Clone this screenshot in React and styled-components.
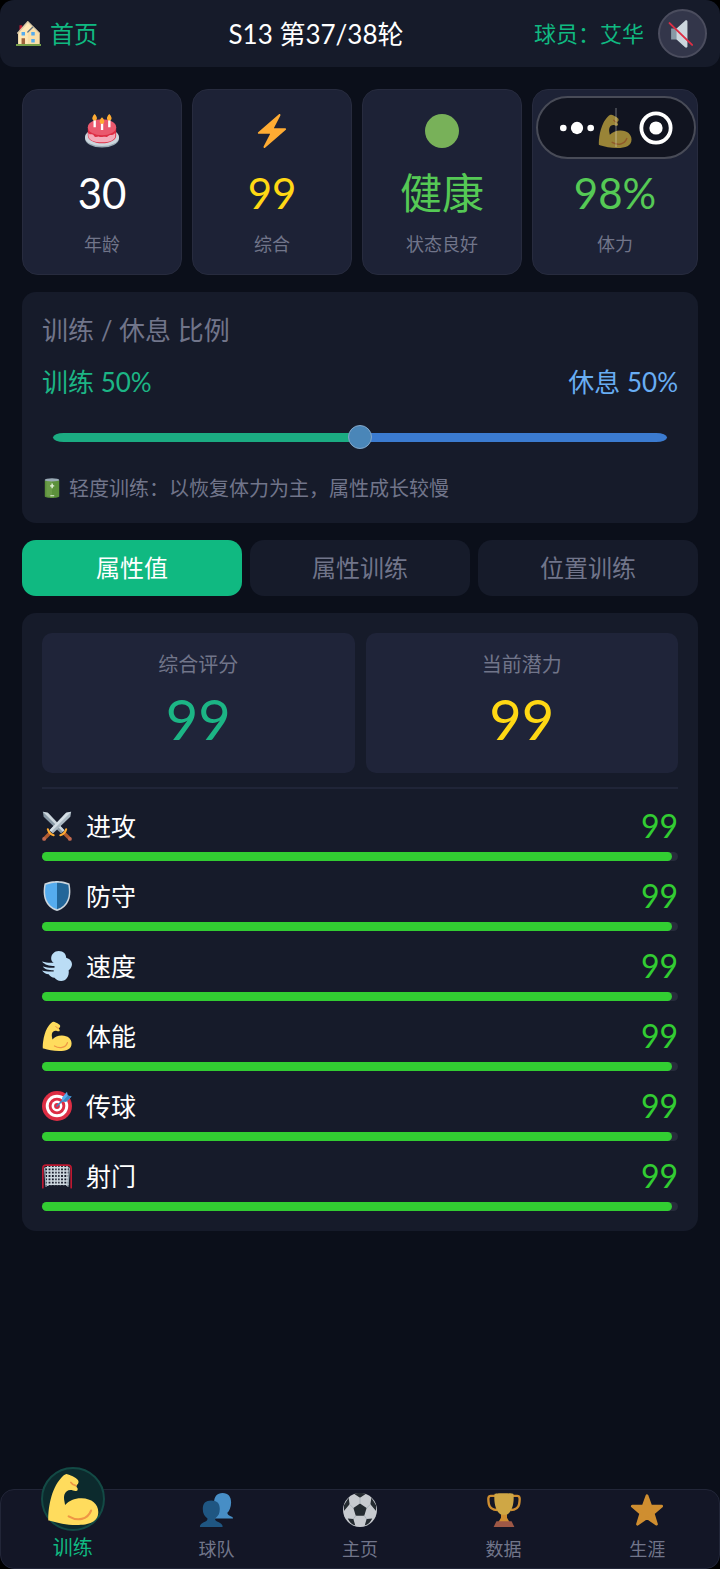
import React, { useState } from 'react'
import styled, { createGlobalStyle } from 'styled-components'

const GlobalStyle = createGlobalStyle`
*{
    box-sizing: border-box;
}
body{
    margin: 0;
    background-color: #000;
    color: #fff;
    font-family: Lato, 'Noto Sans CJK SC', sans-serif;
}
h1, h2, p, dl, dd, dt, ul{
    margin: 0;
    padding: 0;
    font-weight: 400;
}
button{
    font-family: inherit;
    cursor: pointer;
}
a{
    text-decoration: none;
}
`
const Page = styled.div`
display: flex;
flex-direction: column;
min-height: 100vh;
overflow: hidden;
border-radius: 14px;
background-color: #0b0f1a;
`
const Svg = styled.svg`
display: block;
flex: none;
width: ${props => props.$size}px;
height: ${props => props.$size}px;
`
const Header = styled.header`
display: flex;
align-items: center;
justify-content: space-between;
padding: 9px 13px 9px 16px;
border-radius: 14px;
background-color: #161b2a;
`
const HomeLink = styled.a`
display: flex;
align-items: center;
gap: 9px;
color: #10b981;
font-size: 24px;
line-height: 32px;
`
const Title = styled.h1`
font-size: 26px;
line-height: 32px;
`
const Account = styled.div`
display: flex;
align-items: center;
gap: 14px;
color: #10b981;
font-size: 22px;
line-height: 32px;
`
const MuteButton = styled.button`
display: flex;
align-items: center;
justify-content: center;
width: 49px;
height: 49px;
padding: 0;
border: 2px solid #4b4d5e;
border-radius: 50%;
background-color: #33364a;
`
const Main = styled.main`
display: flex;
flex-direction: column;
gap: 17px;
padding: 22px 22px 40px;
`
const Stats = styled.dl`
position: relative;
display: grid;
grid-template-columns: repeat(3, 1fr) 166px;
gap: 10px;
`
const StatCard = styled.div`
display: flex;
flex-direction: column;
align-items: center;
padding: 24px 0 18px;
border: 1px solid #272b3e;
border-radius: 16px;
background-color: #1d2236;
`
const StatValue = styled.dd`
order: 1;
margin-top: 20px;
color: ${props => props.$color};
font-size: 42px;
line-height: 50px;
`
const StatLabel = styled.dt`
order: 2;
margin-top: 14px;
color: #71758a;
font-size: 18px;
line-height: 24px;
`
const Capsule = styled.div`
position: absolute;
top: 7px;
right: 2px;
display: flex;
width: 160px;
height: 63px;
padding: 10px 0;
border: 2px solid #484b57;
border-radius: 32px;
background-color: rgba(0, 0, 0, 0.4);
`
const CapsuleButton = styled.button`
display: flex;
flex: 1;
align-items: center;
justify-content: center;
padding: 0;
border: 0;
background: none;

& + &{
    border-left: 2px solid rgba(255, 255, 255, 0.2);
}
`
const Panel = styled.section`
padding: 20px;
border-radius: 14px;
background-color: #161b2a;
`
const RatioPanel = styled(Panel)`
display: flex;
flex-direction: column;
padding: 22px 20px 23px;
`
const PanelTitle = styled.h2`
color: #71758a;
font-size: 26px;
line-height: 32px;
`
const RatioRow = styled.div`
display: flex;
justify-content: space-between;
margin-top: 20px;
font-size: 26px;
line-height: 32px;
`
const RatioLabel = styled.label`
color: #1cb585;
`
const RestLabel = styled.span`
color: #68adf3;
`
const Slider = styled.input`
appearance: none;
height: 24px;
margin: 27px 11px;
background: none;

&::-webkit-slider-runnable-track{
    height: 9px;
    border-radius: 12px / 5px;
    background: linear-gradient(to right, #1bac82 ${props => props.value}%, #3b7bd0 ${props => props.value}%);
}
&::-webkit-slider-thumb{
    appearance: none;
    width: 24px;
    height: 24px;
    margin-top: -8px;
    border: 1px solid #84a8ca;
    border-radius: 50%;
    background-color: #4a86b8;
}
`
const Hint = styled.p`
display: flex;
align-items: center;
gap: 7px;
color: #71758a;
font-size: 20px;
line-height: 24px;
`
const Tabs = styled.div`
display: grid;
grid-template-columns: repeat(3, 1fr);
gap: 8px;
`
const Tab = styled.button`
height: 56px;
padding: 0;
border: 0;
border-radius: 14px;
background-color: ${props => props.$active ? '#10b981' : '#161b2a'};
color: ${props => props.$active ? '#fff' : '#71758a'};
font-size: 24px;
line-height: 32px;
`
const Scores = styled.dl`
display: grid;
grid-template-columns: 1fr 1fr;
gap: 11px;
padding-bottom: 14px;
border-bottom: 2px solid #202538;
`
const ScoreCard = styled.div`
display: flex;
flex-direction: column;
align-items: center;
height: 140px;
padding-top: 19px;
border-radius: 10px;
background-color: #1f2439;
`
const ScoreLabel = styled.dt`
color: #71758a;
font-size: 20px;
line-height: 24px;
`
const ScoreValue = styled.dd`
margin-top: 11px;
color: ${props => props.$color};
font-size: 56px;
line-height: 64px;
`
const Attributes = styled.ul`
display: flex;
flex-direction: column;
gap: 19px;
padding-top: 21px;
list-style: none;
`
const AttributeHead = styled.div`
display: flex;
align-items: center;
gap: 14px;
margin-bottom: 10px;
font-size: 25px;
line-height: 32px;
`
const AttributeValue = styled.span`
margin-left: auto;
color: #32cd32;
font-size: 32px;
`
const Track = styled.div`
height: 9px;
border-radius: 5px;
background-color: #272c3b;
`
const Fill = styled.div`
height: 100%;
border-radius: 5px;
background-color: #32cd32;
`
const BottomNav = styled.nav`
display: grid;
grid-template-rows: 100%;
grid-template-columns: repeat(5, 1fr);
height: 80px;
margin-top: auto;
border: 1px solid #222638;
border-radius: 14px;
background-color: #131626;
`
const NavItem = styled.a`
display: flex;
flex-direction: column;
align-items: center;
justify-content: flex-end;
gap: ${props => props.$active ? '4px' : '10px'};
padding-bottom: ${props => props.$active ? '9px' : '7px'};
color: ${props => props.$active ? '#10b981' : '#71758a'};
font-size: ${props => props.$active ? '20px' : '18px'};
line-height: 24px;

& > svg{
    opacity: 0.8;
}
`
const NavBubble = styled.span`
display: flex;
flex: none;
align-items: center;
justify-content: center;
width: 64px;
height: 64px;
border: 2px solid #134a45;
border-radius: 50%;
background-color: #0c2a2d;
`

const Icon = ({ size, children }) => (
    <Svg $size={size} viewBox="0 0 36 36" aria-hidden="true">{children}</Svg>
)

const House = ({ size }) => (
    <Icon size={size}>
        <path fill="#BE1931" d="M5 6h4v9H5z" />
        <path fill="#FFE8B6" d="M3 34V18L8 11l8-8 2-1 10 9 6 7v16z" />
        <path fill="#F5D59A" d="M17 34V18l6-7 11 8v15z" opacity=".5" />
        <path fill="none" stroke="#D9C9A6" strokeWidth="2" strokeLinejoin="round" d="M2 18 17 1l17 17" />
        <path fill="none" stroke="#66757F" strokeWidth="2" strokeLinecap="round" d="m17 16 7-7" />
        <path fill="#55ACEE" d="M8 16h5v5H8zM22 16h5v5h-5zM22 26h5v5h-5z" />
        <path fill="#A0643C" d="M8 25h5v9H8z" />
        <path fill="#77A04A" d="M0 33h36v3H0z" />
    </Icon>
)

const Muted = ({ size }) => (
    <Icon size={size}>
        <path fill="#8899A6" d="M4 11h8v14H4z" />
        <path fill="#CCD6DD" d="M11 11 22 1c1-1 3-.500 3 1v32c0 1.500-2 2-3 1L11 25z" />
        <path fill="none" stroke="#DD2E44" strokeWidth="2.500" strokeLinecap="round" d="m2 4 29 28" />
    </Icon>
)

const Cake = ({ size }) => (
    <Icon size={size}>
        <ellipse cx="18" cy="26" rx="18" ry="9.500" fill="#9AAAB4" />
        <ellipse cx="18" cy="24.500" rx="18" ry="9.500" fill="#CCD6DD" />
        <path fill="#DD2E44" d="M3 14v9c0 4.500 6.500 8 15 8s15-3.500 15-8v-9z" />
        <path fill="#F4ABBA" d="M3.500 20c2 3 4 0 6 3s4 0 5.500 1 3 0 5 0 3 1 5-1 3 1 7-3v3.500c0 4-6 6.500-14 6.500S3.500 27.500 3.500 23z" />
        <ellipse cx="18" cy="14" rx="15" ry="8.500" fill="#EA596E" />
        <path fill="#FFF" d="M9 6h2.500v8H9zM16.800 9h2.500v8h-2.500zM24.500 6H27v8h-2.500z" />
        <path fill="#FFAC33" d="M10.200 0c4 4 2.500 7 0 7s-4-3 0-7zM18 3.500c4 4 2.500 7 0 7s-4-3 0-7zM25.700 0c4 4 2.500 7 0 7s-4-3 0-7z" />
    </Icon>
)

const Bolt = ({ size }) => (
    <Icon size={size}>
        <path fill="#FFAC33" d="M32.938 15.651C32.792 15.260 32.418 15 32 15H19.925L26.890 1.458c.219-.426.106-.947-.271-1.243C26.437.071 26.218 0 26 0c-.233 0-.466.082-.653.243L18 6.588 3.347 19.243c-.316.273-.430.714-.284 1.105S3.582 21 4 21h12.075L9.110 34.542c-.219.426-.106.947.271 1.243.182.144.401.215.619.215.233 0 .466-.082.653-.243L18 29.412l14.653-12.655c.317-.273.430-.714.285-1.106z" />
    </Icon>
)

const GreenDot = ({ size }) => (
    <Icon size={size}>
        <circle cx="18" cy="18" r="18" fill="#78B159" />
    </Icon>
)

const Muscle = ({ size }) => (
    <Icon size={size}>
        <path fill="#FFDC5D" d="M1 33C.500 28 2 13 8.500 5 11 2 12.500.500 14 .800c1.500.200 3.500 1.200 5 2.200 1.500 1 3.200 2 2.800 3.500-.300 1.300-1.300 1.500-1.500 2.500 0 1 1.300 1.200.900 2.700-.400 1-2 .800-3.200.400-2.500-.900-5 0-6 3-.700 2.500.200 4.500.500 7 3-3 6.500-4.700 11.500-4.600 7 .200 11.500 4 11.500 9.500 0 7-6.500 9-15 9-7.500 0-13-1.500-18.500-3-.600-.100-1 0-1 0z" />
        <path fill="none" stroke="#EF9645" strokeWidth="1.500" strokeLinecap="round" d="M15 30c6 3.500 13 2.500 15.500-4" />
        <path fill="none" stroke="#EF9645" strokeWidth="1.200" strokeLinecap="round" d="M16.500 6.500c1 1.800 2 2 3.500 2.200" />
    </Icon>
)

const Battery = ({ size }) => (
    <Icon size={size}>
        <path fill="#5C913B" d="M5 4h26v29c0 4-26 4-26 0z" />
        <path fill="#77A856" d="M8 5h10v29C12 34 8 33 8 32z" opacity=".5" />
        <ellipse cx="18" cy="3.500" rx="13" ry="3" fill="#99AAB5" />
        <path fill="#E3F0DA" d="M17 10h2.500v3H22v2.500h-2.500v3H17v-3h-2.500V13H17zM15 31h7v2h-7z" />
    </Icon>
)

const Swords = ({ size }) => (
    <Icon size={size}>
        <path fill="#8899A6" d="m1 1 6 1 20 21-4 4L2 7z" />
        <path fill="#CCD6DD" d="m1 1 6 1 20 21-2 2z" />
        <path fill="#AAB8C2" d="m35 1-6 1L9 23l4 4L34 7z" />
        <path fill="#D5DFE6" d="m35 1-6 1L9 23l2 2z" />
        <path fill="none" stroke="#AF5A2F" strokeWidth="4" strokeLinecap="round" d="m9 27-6 6M27 27l6 6" />
        <path fill="none" stroke="#FFAC33" strokeWidth="2.500" strokeLinecap="round" d="M7 22c1 4 3 6 7 7M29 22c-1 4-3 6-7 7" />
        <circle cx="2.500" cy="33.500" r="2.300" fill="#BF6952" />
        <circle cx="33.500" cy="33.500" r="2.300" fill="#BF6952" />
    </Icon>
)

const Shield = ({ size }) => (
    <Icon size={size}>
        <path fill="#CCD6DD" d="M33 3c-7-3-15-3-15-3S10 0 3 3C0 18 3 31 18 36c15-5 18-18 15-33z" />
        <path fill="#55ACEE" d="M18 34C5 29.500 2 18 4.500 4.500 10.500 2 18 2 18 2z" />
        <path fill="#226699" d="M18 34c13-4.500 16-16 13.500-29.500C25.500 2 18 2 18 2z" />
    </Icon>
)

const Dash = ({ size }) => (
    <Icon size={size}>
        <path fill="#BBDDF5" d="M11 9c0-5 4-9 9-9 6 0 9 4 9 8 4 1 7 4 7 8 0 3-2 6-4 7 1 7-3 13-9 13-4 0-6-2-8-4-3 0-5-1-7-4-3 0-6-2-8-4.500 4 1 9 1.500 14 1v-1.500C8 23 3 22 1 18.500c5 1.500 9 2 14 1.500v-2C9 18 3 16.500 0 12.500c5 1.500 9 2 14 1.500-2-1-3-3-3-5z" />
    </Icon>
)

const Target = ({ size }) => (
    <Icon size={size}>
        <circle cx="18" cy="18" r="18" fill="#DD2E44" />
        <circle cx="18" cy="18" r="13.500" fill="#FFF" />
        <circle cx="18" cy="18" r="10" fill="#DD2E44" />
        <circle cx="18" cy="18" r="6.500" fill="#FFF" />
        <circle cx="18" cy="18" r="3.500" fill="#DD2E44" />
        <path stroke="#3B88C3" strokeWidth="2" strokeLinecap="round" d="M18 18 27 9" />
        <path fill="#55ACEE" d="m24 8 6-7 1 4.500 4.500 1L29 13l-4.500-.500z" />
        <path fill="#3B88C3" d="m24.500 12.500 6.500-7 4.500 1L29 13z" />
    </Icon>
)

const Goal = ({ size }) => (
    <Icon size={size}>
        <path stroke="#CCD6DD" strokeWidth="1.800" d="M4 8h28M4 12h28M4 16h28M4 20h28M4 24h28M4 28h28M7 6v24M11 6v23M15 6v23M18.500 6v23M22 6v23M26 6v23M30 6v24" />
        <path fill="none" stroke="#99AAB5" strokeWidth="1.500" d="m3 8 2 23M33 8l-2 23" />
        <path fill="none" stroke="#BE1931" strokeWidth="2" strokeLinecap="round" d="M1 32V9c0-3 1.500-4 4-4h26c2.500 0 4 1 4 4v23" />
    </Icon>
)

const People = ({ size }) => (
    <Icon size={size}>
        <path fill="#55ACEE" d="M16 27v-2c3-1 5-2 5-4-3-2-5-6-5-11 0-6 3-10 9-10s9 4 9 10c0 5-2 9-4 11 0 2 2 3 4 4 1 0 2 1 2 2z" />
        <path fill="#226699" d="M1 36c0-3 2-4 4-5 3-1 4-2 4-4-3-2-5-5-5-10 0-6 3-9 9-9s9 3 9 9c0 5-2 8-5 10 0 2 1 3 4 4 2 1 4 2 4 5z" />
    </Icon>
)

const Ball = ({ size }) => (
    <Icon size={size}>
        <circle cx="18" cy="18" r="18" fill="#F5F8FA" />
        <path fill="#292F33" d="m18 11 7 5-2.500 8h-9L11 16zM12 1c3-1.500 9-1.500 12 0l-6 4zM1 13 6 5l1 7-6 7zM35 13l-5-8-1 7 6 7zM5 27l6 .500 2 7C9 33 7 31 5 27zM31 27l-6 .500-2 7c4-1.500 6-3.500 8-7.500z" />
        <path stroke="#CCD6DD" d="M18 5v6M7 12l4 4M29 12l-4 4M13.500 24 11 27.500M22.500 24l2.500 3.500" />
    </Icon>
)

const Trophy = ({ size }) => (
    <Icon size={size}>
        <path fill="none" stroke="#FFAC33" strokeWidth="2.500" d="M10 3H4c-3 0-3 3-2 9 1 5 5 6 9 6M26 3h6c3 0 3 3 2 9-1 5-5 6-9 6" />
        <path fill="#FFCC4D" d="M8 1c0-1 20-1 20 0 1 9-1 19-7 22v6h-6v-6C9 20 7 10 8 1z" />
        <path fill="#FFAC33" d="M15 23h6v3l3 5H12l3-5z" />
        <path fill="#C1694F" d="M10 30h16l3 6H7z" />
    </Icon>
)

const Star = ({ size }) => (
    <Icon size={size}>
        <path fill="#FFAC33" stroke="#FFAC33" strokeWidth="3" strokeLinejoin="round" d="m18 3 4 11h11.500l-9 7.500 3.500 11.500-10-7-10 7 3.500-11.500-9-7.500H14z" />
    </Icon>
)

const stats = [
    { icon: Cake, value: '30', label: '年龄', color: '#fff' },
    { icon: Bolt, value: '99', label: '综合', color: '#ffd814' },
    { icon: GreenDot, value: '健康', label: '状态良好', color: '#55c955' },
    { icon: Muscle, value: '98%', label: '体力', color: '#55c955' },
]

const attributes = [
    { icon: Swords, name: '进攻', value: 99 },
    { icon: Shield, name: '防守', value: 99 },
    { icon: Dash, name: '速度', value: 99 },
    { icon: Muscle, name: '体能', value: 99 },
    { icon: Target, name: '传球', value: 99 },
    { icon: Goal, name: '射门', value: 99 },
]

const navItems = [
    { icon: People, name: '球队' },
    { icon: Ball, name: '主页' },
    { icon: Trophy, name: '数据' },
    { icon: Star, name: '生涯' },
]

const tabs = ['属性值', '属性训练', '位置训练']

const Attribute = (props) => {

    const { icon: Glyph, name, value } = props.data;

    return (
        <li>
            <AttributeHead>
                <Glyph size={30} />
                <span>{name}</span>
                <AttributeValue>{value}</AttributeValue>
            </AttributeHead>
            <Track>
                <Fill style={{ width: `${value}%` }} />
            </Track>
        </li>
    )
}

const App = () => {

    const [ratio, setRatio] = useState(50);
    const [tab, setTab] = useState(tabs[0]);

    return (
        <Page>
            <GlobalStyle />
            <Header>
                <HomeLink href="#home">
                    <House size={25} />
                    首页
                </HomeLink>
                <Title>S13 第37/38轮</Title>
                <Account>
                    球员：艾华
                    <MuteButton aria-label="静音">
                        <Muted size={28} />
                    </MuteButton>
                </Account>
            </Header>
            <Main>
                <Stats>
                    {stats.map(({ icon: Glyph, value, label, color }) => (
                        <StatCard key={label}>
                            <Glyph size={34} />
                            <StatLabel>{label}</StatLabel>
                            <StatValue $color={color}>{value}</StatValue>
                        </StatCard>
                    ))}
                    <Capsule>
                        <CapsuleButton aria-label="更多">
                            <Icon size={34}>
                                <circle cx="3.500" cy="18" r="3.500" fill="#FFF" />
                                <circle cx="18" cy="18" r="6.500" fill="#FFF" />
                                <circle cx="32.500" cy="18" r="3.500" fill="#FFF" />
                            </Icon>
                        </CapsuleButton>
                        <CapsuleButton aria-label="关闭">
                            <Icon size={34}>
                                <circle cx="18" cy="18" r="15.500" fill="none" stroke="#FFF" strokeWidth="4" />
                                <circle cx="18" cy="18" r="7" fill="#FFF" />
                            </Icon>
                        </CapsuleButton>
                    </Capsule>
                </Stats>
                <RatioPanel>
                    <PanelTitle>训练 / 休息 比例</PanelTitle>
                    <RatioRow>
                        <RatioLabel htmlFor="ratio">训练 {ratio}%</RatioLabel>
                        <RestLabel>休息 {100 - ratio}%</RestLabel>
                    </RatioRow>
                    <Slider
                        id="ratio"
                        type="range"
                        min="0"
                        max="100"
                        value={ratio}
                        onChange={(e) => setRatio(Number(e.target.value))}
                    />
                    <Hint>
                        <Battery size={20} />
                        轻度训练：以恢复体力为主，属性成长较慢
                    </Hint>
                </RatioPanel>
                <Tabs role="tablist">
                    {tabs.map((name) => (
                        <Tab
                            key={name}
                            role="tab"
                            aria-selected={name === tab}
                            $active={name === tab}
                            onClick={() => setTab(name)}
                        >
                            {name}
                        </Tab>
                    ))}
                </Tabs>
                <Panel>
                    <Scores>
                        <ScoreCard>
                            <ScoreLabel>综合评分</ScoreLabel>
                            <ScoreValue $color="#1cb585">99</ScoreValue>
                        </ScoreCard>
                        <ScoreCard>
                            <ScoreLabel>当前潜力</ScoreLabel>
                            <ScoreValue $color="#ffd814">99</ScoreValue>
                        </ScoreCard>
                    </Scores>
                    <Attributes>
                        {attributes.map((item) => (
                            <Attribute key={item.name} data={item} />
                        ))}
                    </Attributes>
                </Panel>
            </Main>
            <BottomNav>
                <NavItem href="#training" $active aria-current="page">
                    <NavBubble>
                        <Muscle size={52} />
                    </NavBubble>
                    训练
                </NavItem>
                {navItems.map(({ icon: Glyph, name }) => (
                    <NavItem key={name} href={`#${name}`}>
                        <Glyph size={34} />
                        {name}
                    </NavItem>
                ))}
            </BottomNav>
        </Page>
    )
}

export default App
